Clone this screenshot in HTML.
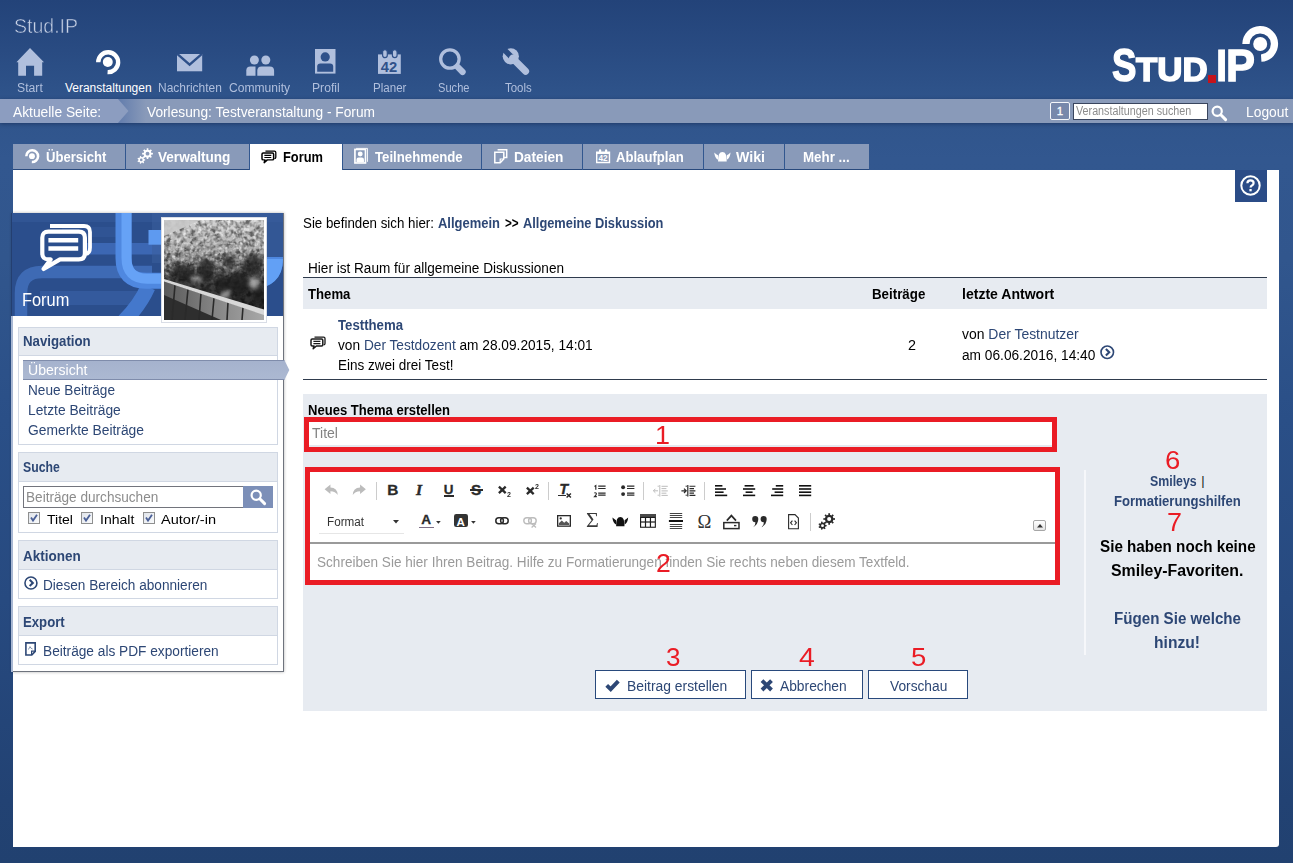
<!DOCTYPE html>
<html lang="de"><head><meta charset="utf-8"><title>Stud.IP - Forum</title>
<style>

*{margin:0;padding:0;box-sizing:border-box}
html,body{width:1293px;height:863px;overflow:hidden}
body{position:relative;font-family:"Liberation Sans",sans-serif;font-size:14px;color:#000;
 background:linear-gradient(to bottom,#234379 0,#294b82 50px,#2f548b 100px,#32578f 160px,#31568d 260px,#2a4f87 420px,#274a80 600px,#224273 800px,#214170 863px)}
.b{position:absolute;display:block}
.t{position:absolute;white-space:nowrap;line-height:normal;transform-origin:0 0}
svg{position:absolute;display:block;overflow:visible}
a{color:#2d4775;text-decoration:none}
.wh{position:absolute;left:18px;width:260px;background:#e7ebf1;border:1px solid #d0d7e3}
.wb{position:absolute;left:18px;width:260px;background:#fff;border:1px solid #d0d7e3;border-top:0}
.tab{position:absolute;top:144px;height:26px;background:#899ab9;border-bottom:1px solid #28497c}
.btn{position:absolute;top:670px;height:29px;background:#fff;border:1px solid #28497c}
.red{position:absolute;border:5px solid #ea1c25;background:#fff}
.sep{position:absolute;width:1px;height:22px;background:#ccc}

</style></head>
<body>
<!-- header -->
<svg style="left:16px;top:48px" width="28" height="28" viewBox="0 0 28 28"><path d="M14 0.1L28 14.3H26.2V27.7H18.1V17.8H10V27.7H2.2V14.3H0.4Z" fill="#b0bfdd"/></svg>
<svg style="left:96.3px;top:49.7px" width="24.4" height="24.4" viewBox="0 0 24 24"><path d="M2.2 12A9.8 9.8 0 1 1 11.4 21.8" fill="none" stroke="#fff" stroke-width="4.3"/><circle cx="11.6" cy="11.9" r="4.9" fill="#fff"/></svg>
<svg style="left:177.3px;top:53.9px" width="25.2" height="17.3" viewBox="0 0 25.2 17.3"><defs><clipPath id="mc"><rect width="25.2" height="17.3"/></clipPath></defs><rect width="25.2" height="17.3" fill="#b0bfdd"/><path d="M-0.6 -0.8L12.6 10.6L25.8 -0.8" fill="none" stroke="#2e5089" stroke-width="2.4" clip-path="url(#mc)"/></svg>
<svg style="left:245.8px;top:55px" width="28.5" height="21" viewBox="0 0 28.5 21"><circle cx="8.4" cy="5" r="4.5" fill="#b0bfdd"/><circle cx="19.8" cy="5" r="4.5" fill="#b0bfdd"/><path d="M0.3 20.7V15.6Q0.3 11.4 4.4 11.4H9.5V20.7Z" fill="#b0bfdd"/><path d="M11.3 20.7V15.8Q11.3 11.4 15.6 11.4H23.8Q28.1 11.4 28.1 15.8V20.7Z" fill="#b0bfdd"/></svg>
<svg style="left:314.8px;top:49.3px" width="20.5" height="24.6" viewBox="0 0 20.5 24.6"><rect width="20.5" height="24.6" fill="#b0bfdd"/><circle cx="10.2" cy="7.9" r="4.6" fill="#2f518a"/><path d="M2.2 22.7V17.6Q2.2 14.4 5.4 14.4H15Q18.2 14.4 18.2 17.6V22.7Z" fill="#2f518a"/></svg>
<svg style="left:377.5px;top:49px" width="22.8" height="25" viewBox="0 0 22.8 25"><path d="M0 5.4H22.8V24.9H0Z" fill="#b0bfdd"/><rect x="4.6" y="0.7" width="4.7" height="8" rx="2.35" fill="#b0bfdd" stroke="#2f518a" stroke-width="1.2"/><rect x="14.4" y="0.7" width="4.7" height="8" rx="2.35" fill="#b0bfdd" stroke="#2f518a" stroke-width="1.2"/><text x="11" y="22.6" font-family="Liberation Sans, sans-serif" font-weight="700" font-size="14" text-anchor="middle" fill="#2f518a" textLength="16.4" lengthAdjust="spacingAndGlyphs">42</text></svg>
<svg style="left:439px;top:48px" width="28" height="28" viewBox="0 0 28 28"><circle cx="10.9" cy="11" r="9.2" fill="none" stroke="#b0bfdd" stroke-width="3.3"/><path d="M18.6 18.8L23.6 24" stroke="#b0bfdd" stroke-width="6.2" stroke-linecap="round"/></svg>
<svg style="left:502px;top:47.5px" width="30" height="29" viewBox="0 0 30 29"><defs><mask id="wm"><rect width="30" height="29" fill="#fff"/><rect x="-1.2" y="-3" width="5.6" height="11" fill="#000" transform="translate(8.8 8.3) rotate(-45) translate(-1.6 -6.2)"/></mask></defs><g mask="url(#wm)"><circle cx="8.8" cy="8.3" r="8.1" fill="#b0bfdd"/></g><path d="M10.6 10.2L23.6 23.2" stroke="#b0bfdd" stroke-width="7" stroke-linecap="round"/></svg>
<div id="lgS" style="position:absolute;white-space:nowrap;line-height:1;font-weight:700;color:#fff;transform-origin:0 0;left:1112px;top:43.4px;font-size:45.8px;-webkit-text-stroke:1.4px #fff;transform:scaleX(.8)">S</div>
<div id="lgT" style="position:absolute;white-space:nowrap;line-height:1;font-weight:700;color:#fff;transform-origin:0 0;left:1136.2px;top:53.3px;font-size:33.8px;-webkit-text-stroke:1.6px #fff;transform:scaleX(1.03)">TUD</div>
<div class="b" style="left:1207.7px;top:75.3px;width:8px;height:7.3px;background:#c5131b"></div>
<div id="lgI" style="position:absolute;white-space:nowrap;line-height:1;font-weight:700;color:#fff;transform-origin:0 0;left:1215.8px;top:43.3px;font-size:45px;-webkit-text-stroke:1px #fff;transform:scaleX(.9)">I</div>
<div id="lgP" style="position:absolute;white-space:nowrap;line-height:1;font-weight:700;color:#fff;transform-origin:0 0;left:1226px;top:43.3px;font-size:45px;-webkit-text-stroke:1.3px #fff;transform:scaleX(.965)">P</div>
<svg style="left:1239.2px;top:23px" width="42" height="42" viewBox="0 0 42 42"><path d="M6.95 21A14.25 14.25 0 1 1 22.2 35.2" fill="none" stroke="#fff" stroke-width="7.3"/><circle cx="21.2" cy="21" r="7" fill="#fff"/></svg>
<!-- bar -->
<div class="b" style="left:0px;top:99px;width:1293px;height:24px;background:#899ab9;box-shadow:0 1px 4px rgba(10,25,60,.45)"></div>
<svg style="left:0;top:99px" width="160" height="24" viewBox="0 0 160 24"><defs><linearGradient id="bg1" x1="0" x2="1" y1="0" y2="0"><stop offset="0" stop-color="#5a76aa"/><stop offset="1" stop-color="#899ab9"/></linearGradient></defs><rect x="112" y="0" width="34" height="24" fill="url(#bg1)"/><path d="M0 0H118L128.5 12L118 24H0Z" fill="#8c9dc0"/></svg>
<div class="b" style="left:1050px;top:102px;width:20px;height:18px;background:#7788ab;border:1px solid #f4f6fa;border-radius:2px"></div>
<div class="b" style="left:1073px;top:102.5px;width:135px;height:17px;background:#fff;border:1px solid #39455e"></div>
<svg style="left:1211px;top:104.5px" width="16" height="16" viewBox="0 0 16 16"><circle cx="6.2" cy="6.2" r="4.6" fill="none" stroke="#fff" stroke-width="2.2"/><path d="M9.8 9.8L14.6 14.6" stroke="#fff" stroke-width="3" stroke-linecap="round"/></svg>
<!-- tabs -->
<div class="tab" style="left:13px;width:112px"></div>
<div class="tab" style="left:126px;width:123px"></div>
<div class="tab" style="left:250px;width:92px;background:#fff;border-bottom:0"></div>
<div class="tab" style="left:343px;width:138px"></div>
<div class="tab" style="left:482px;width:100px"></div>
<div class="tab" style="left:583px;width:119.7px"></div>
<div class="tab" style="left:703.7px;width:80px"></div>
<div class="tab" style="left:784.7px;width:84px"></div>
<svg style="left:25px;top:149px" width="14.4" height="14.4" viewBox="0 0 24 24"><path d="M2.2 12A9.8 9.8 0 1 1 11.4 21.8" fill="none" stroke="#fff" stroke-width="4.3"/><circle cx="11.6" cy="11.9" r="4.9" fill="#fff"/></svg>
<svg style="left:137.3px;top:147.7px" width="16.2" height="16.2" viewBox="0 0 16 16"><path d="M15.73 4.74L15.73 6.46L14.33 6.33L13.70 7.86L14.78 8.76L13.56 9.98L12.66 8.90L11.13 9.53L11.26 10.93L9.54 10.93L9.67 9.53L8.14 8.90L7.24 9.98L6.02 8.76L7.10 7.86L6.47 6.33L5.07 6.46L5.07 4.74L6.47 4.87L7.10 3.34L6.02 2.44L7.24 1.22L8.14 2.30L9.67 1.67L9.54 0.27L11.26 0.27L11.13 1.67L12.66 2.30L13.56 1.22L14.78 2.44L13.70 3.34L14.33 4.87Z M8.05 11.18L8.05 12.42L7.00 12.49L6.49 13.56L7.09 14.42L6.11 15.20L5.41 14.42L4.25 14.69L3.95 15.69L2.74 15.42L2.91 14.38L1.97 13.64L1.00 14.03L0.46 12.91L1.38 12.40L1.38 11.20L0.46 10.69L1.00 9.57L1.97 9.96L2.91 9.22L2.74 8.18L3.95 7.91L4.25 8.91L5.41 9.18L6.11 8.40L7.09 9.18L6.49 10.04L7.00 11.11Z" fill="#fff"/><circle cx="10.4" cy="5.6" r="1.9" fill="#899ab9" class="gh"/><circle cx="4.2" cy="11.8" r="1.3" fill="#899ab9" class="gh"/></svg>
<svg style="left:261px;top:150px" width="15.8" height="13.825" viewBox="0 0 16 14"><path d="M4.5 1.2H13.6Q15 1.2 15 2.6V7.4Q15 8.8 13.6 8.8" fill="none" stroke="#000" stroke-width="1.3"/><path d="M2.2 3H11.6Q12.8 3 12.8 4.2V8.8Q12.8 10 11.6 10H6.4L3.2 12.8L4 10H2.2Q1 10 1 8.8V4.2Q1 3 2.2 3Z" fill="none" stroke="#000" stroke-width="1.5" stroke-linejoin="round"/><path d="M3.4 5.4H10.4M3.4 7.6H10.4" stroke="#000" stroke-width="1.2"/></svg>
<svg style="left:354.3px;top:148.3px" width="14" height="15.8" viewBox="0 0 14 16"><rect x="0" y="0.6" width="12.4" height="15.4" fill="#fff"/><path d="M2 0.4H13.6V14" fill="none" stroke="#fff" stroke-width=".9"/><rect x="1.7" y="2.3" width="9" height="12" fill="#899ab9"/><circle cx="6.2" cy="6" r="2.5" fill="#fff"/><path d="M2.4 14.3V12Q2.4 9.6 4.6 9.6H7.8Q10 9.6 10 12V14.3Z" fill="#fff"/></svg>
<svg style="left:494.3px;top:149px" width="13.5" height="14.5" viewBox="0 0 13.5 14.5"><path d="M3.6 0.8H12.7V8.6H10" fill="none" stroke="#fff" stroke-width="1.5"/><path d="M0.8 3.2H9.8V10L6.2 13.7H0.8Z" fill="none" stroke="#fff" stroke-width="1.5"/><path d="M6.2 13.7V10H9.8" fill="none" stroke="#fff" stroke-width="1.2"/></svg>
<svg style="left:596px;top:148.6px" width="14.2" height="14.2" viewBox="0 0 16 16"><path d="M0.8 3.6H15.2V15.2H0.8Z" fill="none" stroke="#fff" stroke-width="1.6"/><rect x="0.8" y="3.6" width="14.4" height="2" fill="#fff"/><rect x="3.4" y="0.2" width="2.4" height="4.6" rx="1.2" fill="#fff"/><rect x="10.2" y="0.2" width="2.4" height="4.6" rx="1.2" fill="#fff"/><text x="8" y="13.8" font-family="Liberation Sans, sans-serif" font-weight="700" font-size="9.6" text-anchor="middle" fill="#fff" textLength="10.4" lengthAdjust="spacingAndGlyphs">42</text></svg>
<svg style="left:714.3px;top:151.6px" width="16.8" height="9.6" viewBox="0 0 17 10"><path d="M4 9.9Q3.7 0.1 8.5 0.1Q13.3 0.1 13 9.9Z" fill="#fff"/><path d="M0 0.6Q2.2 2.6 3.9 3.4V8.2Q0.6 6.6 0 0.6Z" fill="#fff"/><path d="M17 0.6Q14.8 2.6 13.1 3.4V8.2Q16.4 6.6 17 0.6Z" fill="#fff"/></svg>
<!-- content -->
<div class="b" style="left:13px;top:170px;width:1266px;height:677px;background:#fff;border-radius:0 0 3px 0"></div>
<div class="b" style="left:1235px;top:169.5px;width:32.4px;height:32px;background:#2b4c87;"></div>
<svg style="left:1240.3px;top:175px" width="21" height="21" viewBox="0 0 21 21"><circle cx="10.5" cy="10.5" r="9.2" fill="none" stroke="#fff" stroke-width="2"/><path d="M7.4 8.2Q7.4 5.4 10.5 5.4Q13.6 5.4 13.6 8Q13.6 9.6 12 10.4Q10.6 11.2 10.6 12.6" fill="none" stroke="#fff" stroke-width="2.2"/><rect x="9.4" y="14" width="2.3" height="2.3" fill="#fff"/></svg>
<!-- sidebar -->
<div class="b" style="left:12px;top:213px;width:272px;height:459px;background:#fff;border-right:1px solid #6e737d;border-bottom:1px solid #6e737d;box-shadow:0 0 3px rgba(0,0,0,.3)"></div>
<div class="b" style="left:11px;top:316px;width:2px;height:356px;background:#a9b8d3;"></div>
<div class="b" style="left:11px;top:213px;width:2px;height:103px;background:#243f70;"></div>
<svg style="left:12px;top:213px" width="271" height="103" viewBox="0 0 271 103"><defs><clipPath id="sbc"><rect width="271" height="103"/></clipPath></defs><g clip-path="url(#sbc)"><rect width="271" height="103" fill="#2b4e8c"/><rect x="0" y="0" width="271" height="9" fill="#3a5f9e" opacity=".45"/><rect x="74" y="30" width="110" height="11.5" fill="#3f6cba" opacity=".85"/><rect x="50" y="14" width="60" height="10" fill="#34589a" opacity=".6"/><path d="M9 110V80Q9 59 30 59H140" fill="none" stroke="#3e6ab4" stroke-width="12.5"/><path d="M28 85H128" stroke="#365c9f" stroke-width="14" opacity=".9"/><path d="M112 108Q128 92 136 74" fill="none" stroke="#4478cc" stroke-width="15"/><rect x="140" y="0" width="131" height="50" fill="#3a5e9c" opacity=".55"/><path d="M111.5 -5V45Q111.5 67.7 134 67.7H240Q263 67.7 263 45V44" fill="none" stroke="#4f88e0" stroke-width="16"/><path d="M114.5 -5V45Q114.5 65.7 135 65.7H240" fill="none" stroke="#66a2f6" stroke-width="10"/><path d="M240 67.7Q263 67.7 263 46" fill="none" stroke="#62a0f5" stroke-width="16"/><rect x="136.5" y="17" width="30" height="14.7" fill="#5e9af0"/></g></svg>
<svg style="left:161px;top:217px" width="106" height="106" viewBox="0 0 106 106"><defs><linearGradient id="avg" x1="0" y1="0" x2="0" y2="1"><stop offset="0" stop-color="#d2d2d2"/><stop offset=".25" stop-color="#b4b4b4"/><stop offset=".42" stop-color="#8a8a8a"/><stop offset=".58" stop-color="#484848"/><stop offset=".8" stop-color="#303030"/></linearGradient><linearGradient id="bng" x1="0" y1="0" x2="1" y2="0"><stop offset="0" stop-color="#5a5a5a"/><stop offset=".5" stop-color="#848484"/><stop offset="1" stop-color="#a8a8a8"/></linearGradient><filter id="nz" x="0" y="0" width="100%" height="100%"><feTurbulence type="fractalNoise" baseFrequency="0.2" numOctaves="2" seed="11"/><feColorMatrix type="matrix" values="0 0 0 0 0  0 0 0 0 0  0 0 0 0 0  2.2 2.2 0 0 -1.85"/><feGaussianBlur stdDeviation=".55"/></filter><filter id="nz2" x="0" y="0" width="100%" height="100%"><feTurbulence type="fractalNoise" baseFrequency="0.27" numOctaves="2" seed="4"/><feColorMatrix type="matrix" values="0 0 0 0 1  0 0 0 0 1  0 0 0 0 1  2.2 2.2 0 0 -2.1"/><feGaussianBlur stdDeviation=".5"/></filter><linearGradient id="avm" x1="0" y1="0" x2="0" y2="1"><stop offset="0" stop-color="#fff"/><stop offset=".4" stop-color="#fff"/><stop offset=".68" stop-color="#000"/></linearGradient><mask id="avk"><rect x="3" y="3" width="100" height="100" fill="url(#avm)"/></mask><clipPath id="avc"><rect x="3" y="3" width="100" height="100"/></clipPath><filter id="avbl" x="-20%" y="-20%" width="140%" height="140%"><feGaussianBlur stdDeviation="2"/></filter><clipPath id="avb"><path d="M3 64.5L103 97V103H3Z"/></clipPath></defs><rect x="0.5" y="0.5" width="105" height="105" fill="#fff" stroke="#d9dde6"/><g clip-path="url(#avc)"><rect x="3" y="3" width="100" height="100" fill="url(#avg)"/><rect x="3" y="3" width="100" height="100" filter="url(#nz)" opacity=".5"/><g mask="url(#avk)"><rect x="3" y="3" width="100" height="100" filter="url(#nz2)" opacity=".62"/></g><path d="M3 3H40L3 19Z" fill="#c9c9c9" opacity=".9"/><g filter="url(#avbl)" fill="#1e1e1e" opacity=".78"><ellipse cx="22" cy="56" rx="12" ry="9"/><ellipse cx="45" cy="54" rx="9" ry="12"/><ellipse cx="62" cy="66" rx="8" ry="9"/><ellipse cx="78" cy="66" rx="11" ry="12"/><ellipse cx="92" cy="48" rx="10" ry="11"/><ellipse cx="97" cy="78" rx="6" ry="10"/><ellipse cx="68" cy="44" rx="6" ry="6"/></g><g filter="url(#avbl)" fill="#cfcfcf" opacity=".7"><ellipse cx="64" cy="78" rx="7" ry="3" transform="rotate(-35 64 78)"/><ellipse cx="36" cy="62" rx="6" ry="2.4" transform="rotate(15 36 62)"/><ellipse cx="93" cy="66" rx="5" ry="6"/></g><g clip-path="url(#avb)"><rect x="3" y="60" width="100" height="43" fill="url(#bng)"/><path d="M3 78L60 103H3Z" fill="#2e2e2e"/><path d="M14 68L11 103M27 72L24 103M40 76L38 103M53 81L51 103M67 85L66 103M82 90L81 103" stroke="#2a2a2a" stroke-width="1.6"/></g><path d="M3 62L103 92.5V98L3 64.5Z" fill="#d8d8d8"/></g></svg>
<svg style="left:40px;top:224px" width="52" height="46" viewBox="0 0 52 46"><path d="M10 2H44Q50 2 50 8V23.6Q50 29.6 46 29.8" fill="none" stroke="#fff" stroke-width="3.8"/><path d="M8.4 7.6H38.8Q44.9 7.6 44.9 13.7V29.3Q44.9 35.4 38.8 35.4H20L3.6 45L10.6 35.4H8.4Q2.3 35.4 2.3 29.3V13.7Q2.3 7.6 8.4 7.6Z" fill="#2b4e8c" stroke="#fff" stroke-width="4.2" stroke-linejoin="round"/><path d="M8.4 16.2H38.2M8.4 24.5H38.2" stroke="#fff" stroke-width="4.6"/></svg>
<div class="wh" style="top:327px;height:29px"></div>
<div class="wb" style="top:356px;height:89px"></div>
<div class="wh" style="top:452px;height:30px"></div>
<div class="wb" style="top:482px;height:51px"></div>
<div class="wh" style="top:540px;height:30px"></div>
<div class="wb" style="top:570px;height:29px"></div>
<div class="wh" style="top:606px;height:30px"></div>
<div class="wb" style="top:636px;height:29px"></div>
<svg style="left:23px;top:360px" width="268" height="20" viewBox="0 0 268 20"><defs><linearGradient id="ag" x1="0" y1="0" x2="0" y2="1"><stop offset="0" stop-color="#a5b2cd"/><stop offset="1" stop-color="#acb9d2"/></linearGradient></defs><path d="M0 0H261.3L266.3 10L261.3 20H0Z" fill="url(#ag)"/><path d="M0 0.5H261.3M0 19.5H261.3" stroke="#7f8cab" stroke-width="1"/></svg>
<div class="b" style="left:23px;top:486px;width:221px;height:22px;background:#fff;border:1px solid #72747c"></div>
<div class="b" style="left:243px;top:486px;width:30px;height:22px;background:#7c8fb8;"></div>
<svg style="left:250px;top:489px" width="16" height="16" viewBox="0 0 16 16"><circle cx="6.2" cy="6.2" r="4.6" fill="none" stroke="#fff" stroke-width="2.2"/><path d="M9.8 9.8L14.6 14.6" stroke="#fff" stroke-width="3" stroke-linecap="round"/></svg>
<svg style="left:27.5px;top:512px" width="12" height="12" viewBox="0 0 12 12"><defs><linearGradient id="cb" x1="0" y1="0" x2="1" y2="1"><stop offset="0" stop-color="#dfe3ea"/><stop offset="1" stop-color="#fafbfc"/></linearGradient></defs><rect x="0.5" y="0.5" width="11" height="11" fill="url(#cb)" stroke="#8e8f8f"/><path d="M3 5.6L5 8.6L9 2.8" fill="none" stroke="#4b6097" stroke-width="1.8"/></svg>
<svg style="left:80.5px;top:512px" width="12" height="12" viewBox="0 0 12 12"><defs><linearGradient id="cb" x1="0" y1="0" x2="1" y2="1"><stop offset="0" stop-color="#dfe3ea"/><stop offset="1" stop-color="#fafbfc"/></linearGradient></defs><rect x="0.5" y="0.5" width="11" height="11" fill="url(#cb)" stroke="#8e8f8f"/><path d="M3 5.6L5 8.6L9 2.8" fill="none" stroke="#4b6097" stroke-width="1.8"/></svg>
<svg style="left:142.5px;top:512px" width="12" height="12" viewBox="0 0 12 12"><defs><linearGradient id="cb" x1="0" y1="0" x2="1" y2="1"><stop offset="0" stop-color="#dfe3ea"/><stop offset="1" stop-color="#fafbfc"/></linearGradient></defs><rect x="0.5" y="0.5" width="11" height="11" fill="url(#cb)" stroke="#8e8f8f"/><path d="M3 5.6L5 8.6L9 2.8" fill="none" stroke="#4b6097" stroke-width="1.8"/></svg>
<svg style="left:24px;top:576px" width="13.9" height="13.9" viewBox="0 0 16 16"><circle cx="8" cy="8" r="6.9" fill="none" stroke="#2d4775" stroke-width="1.8"/><path d="M6.5 4.4L10.2 8L6.5 11.6" fill="none" stroke="#2d4775" stroke-width="2.3"/></svg>
<svg style="left:25.3px;top:642px" width="11" height="14" viewBox="0 0 11 14"><path d="M0.9 0.9H10.2V9.4L6.8 13H0.9Z" fill="none" stroke="#2d4775" stroke-width="1.6"/><path d="M6.6 13V9.2H10.2" fill="none" stroke="#2d4775" stroke-width="1.2"/><path d="M3 7.4Q4.6 6.8 5 4.6Q5.6 6.6 7.6 7" fill="none" stroke="#2d4775" stroke-width=".8" opacity=".7"/></svg>
<!-- main -->
<div class="b" style="left:303px;top:277px;width:964px;height:1px;background:#2f3b4d;"></div>
<div class="b" style="left:303px;top:278px;width:964px;height:30.5px;background:#e7ebf1;"></div>
<div class="b" style="left:303px;top:379px;width:964px;height:1px;background:#2f3b4d;"></div>
<svg style="left:310px;top:335.5px" width="16" height="14" viewBox="0 0 16 14"><path d="M4.5 1.2H13.6Q15 1.2 15 2.6V7.4Q15 8.8 13.6 8.8" fill="none" stroke="#1a1a1a" stroke-width="1.3"/><path d="M2.2 3H11.6Q12.8 3 12.8 4.2V8.8Q12.8 10 11.6 10H6.4L3.2 12.8L4 10H2.2Q1 10 1 8.8V4.2Q1 3 2.2 3Z" fill="none" stroke="#1a1a1a" stroke-width="1.5" stroke-linejoin="round"/><path d="M3.4 5.4H10.4M3.4 7.6H10.4" stroke="#1a1a1a" stroke-width="1.2"/></svg>
<svg style="left:1099.7px;top:345px" width="14.5" height="14.5" viewBox="0 0 16 16"><circle cx="8" cy="8" r="6.9" fill="none" stroke="#2d4775" stroke-width="1.8"/><path d="M6.5 4.4L10.2 8L6.5 11.6" fill="none" stroke="#2d4775" stroke-width="2.3"/></svg>
<div class="b" style="left:303px;top:394px;width:964px;height:317px;background:#e7ebf1;"></div>
<div class="red" style="left:304px;top:417px;width:753px;height:35px"><div class="b" style="left:0;right:0;bottom:0;height:2px;background:#e6e9ef"></div></div>
<div class="red" style="left:305px;top:467px;width:755px;height:118px"></div>
<div class="b" style="left:310px;top:542px;width:745px;height:2px;background:#9a9a9a;"></div>
<svg style="left:324px;top:484.4px" width="14.5" height="11.6" viewBox="0 0 14.5 12"><path d="M0.4 5.4L6.4 0.6V3.6Q13.6 3.8 14 11.4Q11.6 7.4 6.4 7.4V10.4Z" fill="#bcbcbc"/></svg>
<svg style="left:351.5px;top:484.4px" width="14.5" height="11.6" viewBox="0 0 14.5 12"><path d="M14.1 5.4L8.1 0.6V3.6Q0.9 3.8 0.5 11.4Q2.9 7.4 8.1 7.4V10.4Z" fill="#bcbcbc"/></svg>
<div class="sep" style="left:375.5px;top:482px;height:18px"></div>
<div class="t" style="left:387.2px;top:481.263px;font-size:15.4px;font-weight:700;color:#2a2a2a;font-family:'Liberation Sans',sans-serif;-webkit-text-stroke:.3px #2a2a2a;">B</div>
<div class="t" style="left:416px;top:481.082px;font-size:15.6px;font-weight:700;color:#2a2a2a;font-family:'Liberation Serif',serif;font-style:italic;-webkit-text-stroke:.4px #2a2a2a;">I</div>
<div class="t" style="left:443.8px;top:481.873px;font-size:13.4px;font-weight:700;color:#2a2a2a;font-family:'Liberation Sans',sans-serif;-webkit-text-stroke:.3px #2a2a2a;">U</div>
<div class="b" style="left:443.6px;top:495.3px;width:10px;height:1.5px;background:#2a2a2a"></div>
<div class="t" style="left:471px;top:481.263px;font-size:15.4px;font-weight:700;color:#2a2a2a;font-family:'Liberation Sans',sans-serif;-webkit-text-stroke:.3px #2a2a2a;">S</div>
<div class="b" style="left:470px;top:489.4px;width:12.6px;height:1.5px;background:#2a2a2a"></div>
<svg style="left:498.3px;top:486px" width="8.6" height="7.8" viewBox="0 0 8.6 7.8"><path d="M0.9 0.6L7.7 7.2M7.7 0.6L0.9 7.2" stroke="#2a2a2a" stroke-width="2.3"/></svg>
<div class="t" style="left:507px;top:491.208px;font-size:6.4px;font-weight:700;color:#2a2a2a;font-family:'Liberation Sans',sans-serif;transform:scaleX(1.1);">2</div>
<svg style="left:526px;top:487.2px" width="8.6" height="7.8" viewBox="0 0 8.6 7.8"><path d="M0.9 0.6L7.7 7.2M7.7 0.6L0.9 7.2" stroke="#2a2a2a" stroke-width="2.3"/></svg>
<div class="t" style="left:534.8px;top:483.408px;font-size:6.4px;font-weight:700;color:#2a2a2a;font-family:'Liberation Sans',sans-serif;transform:scaleX(1.1);">2</div>
<div class="sep" style="left:548.3px;top:482px;height:18px"></div>
<div class="t" style="left:559.2px;top:481.387px;font-size:14.6px;font-weight:700;color:#2a2a2a;font-family:'Liberation Sans',sans-serif;font-style:italic;-webkit-text-stroke:.3px #2a2a2a;">T</div>
<div class="b" style="left:558px;top:495.1px;width:7.6px;height:1.4px;background:#2a2a2a"></div>
<svg style="left:566.2px;top:492.8px" width="5.5" height="5" viewBox="0 0 5.5 5"><path d="M0.6 0.5L4.9 4.5M4.9 0.5L0.6 4.5" stroke="#2a2a2a" stroke-width="1.5"/></svg>
<svg style="left:593.6px;top:484.8px" width="12" height="12.6" viewBox="0 0 12 12.6"><path d="M4.2 1.2H11.6M4.2 3.5H11.6M4.2 8.1H11.6M4.2 10.2H11.6" stroke="#2a2a2a" stroke-width="1.15"/><path d="M0.5 1.5L1.8 0.6V4.8" stroke="#2a2a2a" stroke-width="1.15" fill="none"/><path d="M0.4 8.3Q0.4 7.7 1.4 7.7Q2.4 7.7 2.4 8.7Q2.4 9.6 0.5 11.6H2.8" stroke="#2a2a2a" stroke-width="1.1" fill="none"/></svg>
<svg style="left:621px;top:484.8px" width="13.6" height="12.6" viewBox="0 0 13.6 12.6"><path d="M6 1.2H13.4M6 3.5H13.4M6 8.1H13.4M6 10.2H13.4" stroke="#2a2a2a" stroke-width="1.15"/><circle cx="2.1" cy="2.3" r="1.95" fill="#2a2a2a"/><circle cx="2.1" cy="9.1" r="1.95" fill="#2a2a2a"/></svg>
<div class="sep" style="left:643.3px;top:482px;height:18px"></div>
<svg style="left:652.6px;top:484.6px" width="15" height="11.6" viewBox="0 0 15 11.6"><path d="M6.8 0V11.6" stroke="#bcbcbc" stroke-width="1"/><path d="M8.5 1.3H14.8M8.5 3.6H13.4M8.5 5.9H14.8M8.5 8.2H13.4M8.5 10.4H14.8" stroke="#bcbcbc" stroke-width="1"/><path d="M0.4 5.8H5M2.4 3.8L0.4 5.8L2.4 7.8" stroke="#bcbcbc" stroke-width="1" fill="none"/><path d="M5.2 0.6V2M5.2 9.6V11" stroke="#bcbcbc" stroke-width=".9"/></svg>
<svg style="left:680.5px;top:484.6px" width="15" height="11.6" viewBox="0 0 15 11.6"><path d="M6.8 0V11.6" stroke="#2a2a2a" stroke-width="1.2"/><path d="M8.5 1.3H14.4M8.5 3.6H13M8.5 5.9H14.4M8.5 8.2H13M8.5 10.4H14.4" stroke="#2a2a2a" stroke-width="1.15"/><path d="M0.4 5.8H5M3 3.6L5.2 5.8L3 8" stroke="#2a2a2a" stroke-width="1.2" fill="none"/><path d="M5.2 0.6V2M5.2 9.6V11" stroke="#2a2a2a" stroke-width=".9"/></svg>
<div class="sep" style="left:704.3px;top:482px;height:18px"></div>
<svg style="left:714.6px;top:484px" width="12.8" height="13" viewBox="0 0 12.8 13"><path d="M0 1.8H7.4" stroke="#111" stroke-width="1.6"/><path d="M0 5H11" stroke="#111" stroke-width="1.6"/><path d="M0 8.2H8.6" stroke="#111" stroke-width="1.6"/><path d="M0 11.4H12.2" stroke="#111" stroke-width="1.6"/></svg>
<svg style="left:742.6px;top:484px" width="12.8" height="13" viewBox="0 0 12.8 13"><path d="M1.6 1.8H10.6" stroke="#111" stroke-width="1.6"/><path d="M0 5H12.2" stroke="#111" stroke-width="1.6"/><path d="M2.6 8.2H9.6" stroke="#111" stroke-width="1.6"/><path d="M0 11.4H12.2" stroke="#111" stroke-width="1.6"/></svg>
<svg style="left:770.8px;top:484px" width="12.8" height="13" viewBox="0 0 12.8 13"><path d="M4.8 1.8H12.2" stroke="#111" stroke-width="1.6"/><path d="M1.2 5H12.2" stroke="#111" stroke-width="1.6"/><path d="M3.6 8.2H12.2" stroke="#111" stroke-width="1.6"/><path d="M0 11.4H12.2" stroke="#111" stroke-width="1.6"/></svg>
<svg style="left:798.8px;top:484px" width="12.8" height="13" viewBox="0 0 12.8 13"><path d="M0 1.8H12.2" stroke="#111" stroke-width="1.6"/><path d="M0 5H12.2" stroke="#111" stroke-width="1.6"/><path d="M0 8.2H12.2" stroke="#111" stroke-width="1.6"/><path d="M0 11.4H12.2" stroke="#111" stroke-width="1.6"/></svg>
<div class="b" style="left:319px;top:532.6px;width:85px;height:1px;background:#e6e6e6"></div>
<svg style="left:393.3px;top:520px" width="6" height="3.4" viewBox="0 0 6 3.4"><path d="M0 0H6L3 3.4Z" fill="#333"/></svg>
<div class="t" style="left:421.2px;top:512.492px;font-size:13.6px;font-weight:700;color:#2a2a2a;font-family:'Liberation Sans',sans-serif;-webkit-text-stroke:.3px #2a2a2a;">A</div>
<div class="b" style="left:419.2px;top:526.7px;width:14.6px;height:1.7px;background:#7d6f86"></div>
<svg style="left:435.8px;top:520.6px" width="4.8" height="2.8" viewBox="0 0 5 3"><path d="M0 0H5L2.5 3Z" fill="#333"/></svg>
<div class="b" style="left:454.1px;top:514.1px;width:13.6px;height:13.4px;background:#333;border-radius:2.2px"></div>
<div class="t" style="left:456.6px;top:514.702px;font-size:11.6px;font-weight:700;color:#fff;font-family:'Liberation Sans',sans-serif;">A</div>
<svg style="left:470.6px;top:520.6px" width="4.8" height="2.8" viewBox="0 0 5 3"><path d="M0 0H5L2.5 3Z" fill="#333"/></svg>
<svg style="left:495px;top:516.8px" width="14" height="7.6" viewBox="0 0 14 7.6"><rect x="0.8" y="0.8" width="7.6" height="6" rx="3" fill="none" stroke="#2a2a2a" stroke-width="1.5"/><rect x="5.6" y="0.8" width="7.6" height="6" rx="3" fill="none" stroke="#2a2a2a" stroke-width="1.5"/></svg>
<svg style="left:523px;top:516.8px" width="14" height="7.6" viewBox="0 0 14 7.6"><rect x="0.8" y="0.8" width="7.6" height="6" rx="3" fill="none" stroke="#bcbcbc" stroke-width="1.4"/><rect x="5.6" y="0.8" width="7.6" height="6" rx="3" fill="none" stroke="#bcbcbc" stroke-width="1.4"/></svg>
<svg style="left:531.4px;top:522.6px" width="5.6" height="5.2" viewBox="0 0 5.6 5.2"><path d="M0.6 0.6L5 4.6M5 0.6L0.6 4.6" stroke="#bcbcbc" stroke-width="1.3"/></svg>
<svg style="left:557px;top:515.1px" width="14" height="11.8" viewBox="0 0 14 11.8"><rect x="0.65" y="0.65" width="12.7" height="10.5" fill="#fff" stroke="#2a2a2a" stroke-width="1.3"/><path d="M1.8 10V8.2L4.8 5.6L7.2 7.8L9.2 6L12.2 8.6V10Z" fill="#555"/><circle cx="3.7" cy="3.4" r="1.15" fill="#2a2a2a"/></svg>
<div class="t" style="left:585.6px;top:508.947px;font-size:20.5px;font-weight:400;color:#3a3a3a;font-family:'Liberation Serif',serif;transform:scaleX(1.08);">&Sigma;</div>
<svg style="left:611.8px;top:516.5px" width="16.6" height="9.3" viewBox="0 0 17 10"><path d="M4 9.9Q3.7 0.1 8.5 0.1Q13.3 0.1 13 9.9Z" fill="#111"/><path d="M0 0.6Q2.2 2.6 3.9 3.4V8.2Q0.6 6.6 0 0.6Z" fill="#111"/><path d="M17 0.6Q14.8 2.6 13.1 3.4V8.2Q16.4 6.6 17 0.6Z" fill="#111"/></svg>
<svg style="left:640px;top:514.2px" width="15.9" height="13.8" viewBox="0 0 15.9 13.8"><rect width="15.9" height="13.8" fill="#1c1c1c"/><rect width="15.9" height="2.9" fill="#4a4a4a"/><rect x="1.15" y="4" width="3.75" height="3.4" fill="#fff"/><rect x="1.15" y="8.6" width="3.75" height="4.1" fill="#fff"/><rect x="6.1" y="4" width="3.75" height="3.4" fill="#fff"/><rect x="6.1" y="8.6" width="3.75" height="4.1" fill="#fff"/><rect x="11.05" y="4" width="3.75" height="3.4" fill="#fff"/><rect x="11.05" y="8.6" width="3.75" height="4.1" fill="#fff"/></svg>
<svg style="left:668px;top:513px" width="16" height="16" viewBox="0 0 16 16"><path d="M1.8 0.5H14.2M1.8 2.5H14.2M1.8 4.5H14.2M1.8 11.5H14.2M1.8 13.5H14.2M1.8 15.5H14.2" stroke="#444" stroke-width="1"/><path d="M0.9 8H15" stroke="#111" stroke-width="2"/></svg>
<div class="t" style="left:697.4px;top:510.767px;font-size:18.6px;font-weight:400;color:#333;font-family:'Liberation Serif',serif;">&Omega;</div>
<svg style="left:723.3px;top:513.6px" width="16.8" height="15.4" viewBox="0 0 16.8 15.4"><path d="M3.8 6.6L8.4 1.6L13 6.6" fill="none" stroke="#2a2a2a" stroke-width="1.7"/><rect x="0.8" y="8.6" width="15.2" height="6" fill="#fff" stroke="#2a2a2a" stroke-width="1.5"/><path d="M11 11.6H13.4" stroke="#2a2a2a" stroke-width="1.4"/></svg>
<svg style="left:752px;top:516px" width="15" height="11.4" viewBox="0 0 15 11.4"><path d="M3.2 0A3.1 3.1 0 0 1 6.3 3.1Q6.3 8.4 1.2 11.2Q3.8 8.4 3.4 6.2A3.1 3.1 0 0 1 3.2 0Z" fill="#2a2a2a"/><path d="M11.6 0A3.1 3.1 0 0 1 14.7 3.1Q14.7 8.4 9.6 11.2Q12.2 8.4 11.8 6.2A3.1 3.1 0 0 1 11.6 0Z" fill="#2a2a2a"/></svg>
<svg style="left:787.7px;top:513.6px" width="11" height="15.4" viewBox="0 0 11 15.4"><path d="M0.6 0.6H7L10.4 4V14.8H0.6Z" fill="#fff" stroke="#2a2a2a" stroke-width="1.1"/><path d="M4.4 6.6L2.6 8.8L4.4 11M6.6 6.6L8.4 8.8L6.6 11" fill="none" stroke="#2a2a2a" stroke-width="1.1"/></svg>
<div class="sep" style="left:810px;top:512.5px;height:18px"></div>
<svg style="left:818.3px;top:512.6px" width="17.2" height="17.2" viewBox="0 0 16 16"><path d="M15.73 4.74L15.73 6.46L14.33 6.33L13.70 7.86L14.78 8.76L13.56 9.98L12.66 8.90L11.13 9.53L11.26 10.93L9.54 10.93L9.67 9.53L8.14 8.90L7.24 9.98L6.02 8.76L7.10 7.86L6.47 6.33L5.07 6.46L5.07 4.74L6.47 4.87L7.10 3.34L6.02 2.44L7.24 1.22L8.14 2.30L9.67 1.67L9.54 0.27L11.26 0.27L11.13 1.67L12.66 2.30L13.56 1.22L14.78 2.44L13.70 3.34L14.33 4.87Z M8.05 11.18L8.05 12.42L7.00 12.49L6.49 13.56L7.09 14.42L6.11 15.20L5.41 14.42L4.25 14.69L3.95 15.69L2.74 15.42L2.91 14.38L1.97 13.64L1.00 14.03L0.46 12.91L1.38 12.40L1.38 11.20L0.46 10.69L1.00 9.57L1.97 9.96L2.91 9.22L2.74 8.18L3.95 7.91L4.25 8.91L5.41 9.18L6.11 8.40L7.09 9.18L6.49 10.04L7.00 11.11Z" fill="#2a2a2a"/><circle cx="10.4" cy="5.6" r="1.9" fill="#fff" class="gh"/><circle cx="4.2" cy="11.8" r="1.3" fill="#fff" class="gh"/></svg>
<div class="b" style="left:1033px;top:519.6px;width:13.4px;height:11.8px;border:1px solid #a6a6a6;border-radius:2px;background:linear-gradient(#fff,#e4e4e4)"></div>
<svg style="left:1036.8px;top:523.8px" width="6" height="3.4" viewBox="0 0 6 3.4"><path d="M0 3.4H6L3 0Z" fill="#333"/></svg>
<div class="b" style="left:1084px;top:470px;width:1.5px;height:185px;background:#f6f7fa;"></div>
<div class="btn" style="left:595px;width:150.5px"></div>
<div class="btn" style="left:751px;width:112px"></div>
<div class="btn" style="left:868px;width:100px"></div>
<svg style="left:605.3px;top:679px" width="15" height="12.5" viewBox="0 0 15 12.5"><path d="M1.7 6.4L5.7 10.2L13.3 2.2" fill="none" stroke="#2d4775" stroke-width="3.9"/></svg>
<svg style="left:760px;top:679px" width="13.5" height="12.5" viewBox="0 0 13.5 12.5"><path d="M2 1.6L11.5 11M11.5 1.6L2 11" fill="none" stroke="#2d4775" stroke-width="3.9"/></svg>
<!-- text -->
<div class="t" style="left:13.60px;top:14.00px;font-size:21px;color:#c9d3e6;transform:scaleX(0.9290);-webkit-text-stroke:.55px #27477e;">Stud.IP</div>
<div class="t" style="left:16.80px;top:80.94px;font-size:12px;color:#b0bfdd;transform:scaleX(1.0180);">Start</div>
<div class="t" style="left:64.90px;top:80.94px;font-size:12px;color:#fff;">Veranstaltungen</div>
<div class="t" style="left:158.40px;top:80.94px;font-size:12px;color:#b0bfdd;transform:scaleX(0.9980);">Nachrichten</div>
<div class="t" style="left:229.00px;top:80.94px;font-size:12px;color:#b0bfdd;transform:scaleX(1.0068);">Community</div>
<div class="t" style="left:311.70px;top:80.94px;font-size:12px;color:#b0bfdd;transform:scaleX(1.0130);">Profil</div>
<div class="t" style="left:372.80px;top:80.94px;font-size:12px;color:#b0bfdd;transform:scaleX(0.9629);">Planer</div>
<div class="t" style="left:437.90px;top:80.94px;font-size:12px;color:#b0bfdd;transform:scaleX(0.9256);">Suche</div>
<div class="t" style="left:504.50px;top:80.94px;font-size:12px;color:#b0bfdd;transform:scaleX(0.9530);">Tools</div>
<div class="t" style="left:13.10px;top:104.33px;font-size:14px;color:#fff;transform:scaleX(0.9855);">Aktuelle Seite:</div>
<div class="t" style="left:147.00px;top:104.33px;font-size:14px;color:#fff;transform:scaleX(0.9810);">Vorlesung: Testveranstaltung - Forum</div>
<div class="t" style="left:1060.00px;top:105.19px;font-size:11.5px;color:#fff;transform-origin:0 0;transform:translateX(-50%);-webkit-text-stroke:.3px #fff;">1</div>
<div class="t" style="left:1076.40px;top:103.94px;font-size:12px;color:#8c8c8c;transform:scaleX(0.8954);">Veranstaltungen suchen</div>
<div class="t" style="left:1245.60px;top:104.13px;font-size:14px;color:#fff;transform:scaleX(0.9877);">Logout</div>
<div class="t" style="left:45.70px;top:149.03px;font-size:14px;color:#fff;font-weight:700;transform:scaleX(0.9338);">Übersicht</div>
<div class="t" style="left:158.30px;top:149.03px;font-size:14px;color:#fff;font-weight:700;transform:scaleX(0.9694);">Verwaltung</div>
<div class="t" style="left:282.70px;top:149.03px;font-size:14px;color:#000;font-weight:700;transform:scaleX(0.9182);">Forum</div>
<div class="t" style="left:375.00px;top:149.03px;font-size:14px;color:#fff;font-weight:700;transform:scaleX(0.9421);">Teilnehmende</div>
<div class="t" style="left:514.30px;top:149.03px;font-size:14px;color:#fff;font-weight:700;transform:scaleX(0.9767);">Dateien</div>
<div class="t" style="left:616.00px;top:149.03px;font-size:14px;color:#fff;font-weight:700;transform:scaleX(0.9358);">Ablaufplan</div>
<div class="t" style="left:736.00px;top:149.03px;font-size:14px;color:#fff;font-weight:700;transform:scaleX(1.0120);">Wiki</div>
<div class="t" style="left:803.30px;top:149.03px;font-size:14px;color:#fff;font-weight:700;transform:scaleX(0.9528);">Mehr ...</div>
<div class="t" style="left:303.30px;top:215.03px;font-size:14px;color:#000;transform:scaleX(0.9509);">Sie befinden sich hier:</div>
<div class="t" style="left:438.30px;top:215.03px;font-size:14px;color:#2d4775;font-weight:700;transform:scaleX(0.9267);">Allgemein</div>
<div class="t" style="left:505.00px;top:215.03px;font-size:14px;color:#000;font-weight:700;transform:scaleX(0.8374);">&gt;&gt;</div>
<div class="t" style="left:523.30px;top:215.03px;font-size:14px;color:#2d4775;font-weight:700;transform:scaleX(0.9160);">Allgemeine Diskussion</div>
<div class="t" style="left:308.30px;top:259.63px;font-size:14px;color:#000;transform:scaleX(0.9705);">Hier ist Raum für allgemeine Diskussionen</div>
<div class="t" style="left:308.30px;top:285.63px;font-size:14px;color:#000;font-weight:700;transform:scaleX(0.9396);">Thema</div>
<div class="t" style="left:872.00px;top:285.63px;font-size:14px;color:#000;font-weight:700;transform:scaleX(0.9513);">Beiträge</div>
<div class="t" style="left:962.00px;top:285.63px;font-size:14px;color:#000;font-weight:700;transform:scaleX(1.0027);">letzte Antwort</div>
<div class="t" style="left:338.30px;top:316.93px;font-size:14px;color:#2d4775;font-weight:700;transform:scaleX(0.9422);">Testthema</div>
<div class="t" style="left:338.30px;top:336.63px;font-size:14px;color:#000;transform:scaleX(0.9778);">von <a>Der Testdozent</a> am 28.09.2015, 14:01</div>
<div class="t" style="left:338.30px;top:356.63px;font-size:14px;color:#000;transform:scaleX(0.9651);">Eins zwei drei Test!</div>
<div class="t" style="left:908.00px;top:336.63px;font-size:14px;color:#000;transform:scaleX(1.0261);">2</div>
<div class="t" style="left:962.00px;top:326.33px;font-size:14px;color:#000;transform:scaleX(0.9953);">von <a>Der Testnutzer</a></div>
<div class="t" style="left:962.00px;top:346.63px;font-size:14px;color:#000;transform:scaleX(0.9785);">am 06.06.2016, 14:40</div>
<div class="t" style="left:308.30px;top:401.63px;font-size:14px;color:#000;font-weight:700;transform:scaleX(0.9311);">Neues Thema erstellen</div>
<div class="t" style="left:312.00px;top:424.83px;font-size:14px;color:#828282;transform:scaleX(1.0024);">Titel</div>
<div class="t" style="left:327.30px;top:515.44px;font-size:12px;color:#333;transform:scaleX(0.9733);">Format</div>
<div class="t" style="left:316.70px;top:554.33px;font-size:14px;color:#9a9a9a;transform:scaleX(0.9692);">Schreiben Sie hier Ihren Beitrag. Hilfe zu Formatierungen finden Sie rechts neben diesem Textfeld.</div>
<div class="t" style="left:626.70px;top:677.63px;font-size:14px;color:#2d4775;transform:scaleX(0.9914);">Beitrag erstellen</div>
<div class="t" style="left:780.00px;top:677.63px;font-size:14px;color:#2d4775;transform:scaleX(0.9850);">Abbrechen</div>
<div class="t" style="left:889.70px;top:677.63px;font-size:14px;color:#2d4775;transform:scaleX(0.9816);">Vorschau</div>
<div class="t" style="left:654.60px;top:420.07px;font-size:26px;color:#ea1c25;transform:scaleX(1.0367);">1</div>
<div class="t" style="left:655.60px;top:548.27px;font-size:26px;color:#ea1c25;transform:scaleX(1.0229);">2</div>
<div class="t" style="left:666.00px;top:642.27px;font-size:26px;color:#ea1c25;transform:scaleX(1.0022);">3</div>
<div class="t" style="left:798.60px;top:642.27px;font-size:26px;color:#ea1c25;transform:scaleX(1.0920);">4</div>
<div class="t" style="left:911.00px;top:642.27px;font-size:26px;color:#ea1c25;transform:scaleX(1.0575);">5</div>
<div class="t" style="left:1165.00px;top:444.97px;font-size:26px;color:#ea1c25;transform:scaleX(1.0575);">6</div>
<div class="t" style="left:1167.00px;top:507.27px;font-size:26px;color:#ea1c25;transform:scaleX(1.0367);">7</div>
<div class="t" style="left:1150.30px;top:473.03px;font-size:14px;color:#2d4775;font-weight:700;transform:scaleX(0.8822);">Smileys</div>
<div class="t" style="left:1201.30px;top:473.44px;font-size:13px;color:#222;">|</div>
<div class="t" style="left:1114.30px;top:493.03px;font-size:14px;color:#2d4775;font-weight:700;transform:scaleX(0.9360);">Formatierungshilfen</div>
<div class="t" style="left:1099.70px;top:536.80px;font-size:16.8px;color:#000;font-weight:700;transform:scaleX(0.9068);">Sie haben noch keine</div>
<div class="t" style="left:1111.30px;top:561.10px;font-size:16.8px;color:#000;font-weight:700;transform:scaleX(0.9465);">Smiley-Favoriten.</div>
<div class="t" style="left:1114.30px;top:608.80px;font-size:16.8px;color:#2d4775;font-weight:700;transform:scaleX(0.9018);">Fügen Sie welche</div>
<div class="t" style="left:1154.30px;top:632.80px;font-size:16.8px;color:#2d4775;font-weight:700;transform:scaleX(0.9311);">hinzu!</div>
<div class="t" style="left:21.70px;top:289.71px;font-size:18px;color:#fff;transform:scaleX(0.9093);">Forum</div>
<div class="t" style="left:23.30px;top:333.03px;font-size:14px;color:#2d4775;font-weight:700;transform:scaleX(0.9458);">Navigation</div>
<div class="t" style="left:28.30px;top:361.63px;font-size:14px;color:#fff;transform:scaleX(1.0044);">Übersicht</div>
<div class="t" style="left:28.30px;top:381.63px;font-size:14px;color:#2d4775;transform:scaleX(0.9719);">Neue Beiträge</div>
<div class="t" style="left:28.30px;top:401.63px;font-size:14px;color:#2d4775;transform:scaleX(0.9854);">Letzte Beiträge</div>
<div class="t" style="left:28.30px;top:421.83px;font-size:14px;color:#2d4775;transform:scaleX(0.9872);">Gemerkte Beiträge</div>
<div class="t" style="left:23.30px;top:459.33px;font-size:14px;color:#2d4775;font-weight:700;transform:scaleX(0.8735);">Suche</div>
<div class="t" style="left:26.00px;top:488.63px;font-size:14px;color:#8c8c8c;transform:scaleX(0.9713);">Beiträge durchsuchen</div>
<div class="t" style="left:46.70px;top:511.66px;font-size:13.3px;color:#000;transform:scaleX(1.0552);">Titel</div>
<div class="t" style="left:100.00px;top:511.66px;font-size:13.3px;color:#000;transform:scaleX(1.0544);">Inhalt</div>
<div class="t" style="left:161.00px;top:511.66px;font-size:13.3px;color:#000;transform:scaleX(1.0942);">Autor/-in</div>
<div class="t" style="left:23.30px;top:547.63px;font-size:14px;color:#2d4775;font-weight:700;transform:scaleX(0.9634);">Aktionen</div>
<div class="t" style="left:43.30px;top:577.03px;font-size:14px;color:#2d4775;transform:scaleX(0.9734);">Diesen Bereich abonnieren</div>
<div class="t" style="left:23.30px;top:613.63px;font-size:14px;color:#2d4775;font-weight:700;transform:scaleX(0.9404);">Export</div>
<div class="t" style="left:43.30px;top:642.63px;font-size:14px;color:#2d4775;transform:scaleX(0.9774);">Beiträge als PDF exportieren</div>
</body></html>
